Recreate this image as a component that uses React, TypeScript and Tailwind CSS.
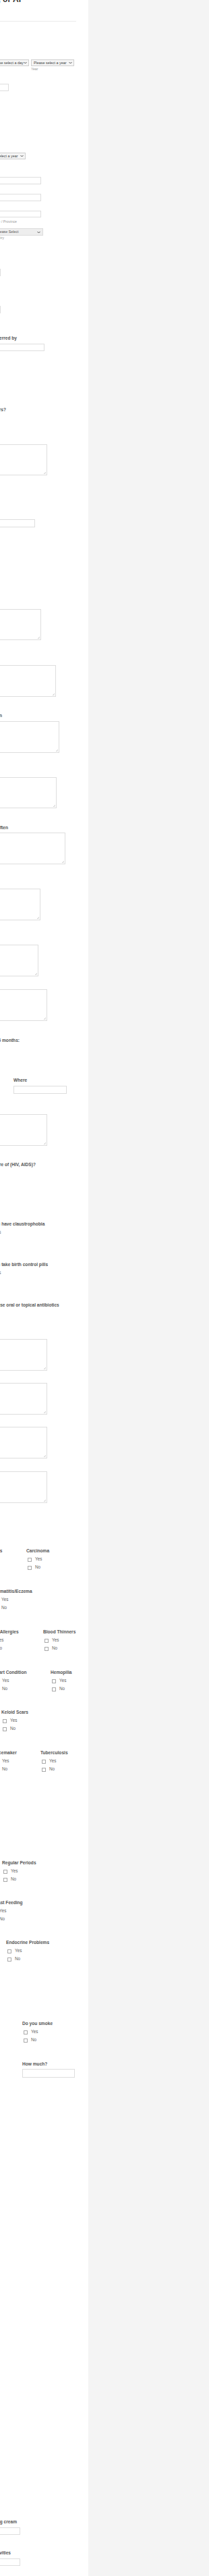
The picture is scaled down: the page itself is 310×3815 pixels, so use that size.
type ClipProps = { text: string; cls: string };

// text whose left part runs off the visible column
function Clip({ text, cls }: ClipProps) {
  return (
    <div className={`flex justify-end ${cls}`}>
      <span className="shrink-0 whitespace-nowrap">{text}</span>
    </div>
  );
}

function Label({ text, cls }: ClipProps) {
  return <Clip text={text} cls={`h-[8px] text-[6.6px] leading-[8px] font-bold text-[#555] ${cls}`} />;
}

function Caption({ text, cls }: ClipProps) {
  return <Clip text={text} cls={`h-[7px] text-[5.2px] leading-[7px] text-[#999] ${cls}`} />;
}

function Input({ cls }: { cls: string }) {
  return <div className={`shrink-0 border border-[#dedede] bg-white ${cls}`} />;
}

function Area({ cls }: { cls: string }) {
  return (
    <div className={`relative h-[47px] shrink-0 border border-[#dedede] bg-white ${cls}`}>
      <svg className="absolute bottom-[1px] right-[1px]" width="4" height="4" viewBox="0 0 4 4">
        <path d="M1 4 L4 1 M2.5 4 L4 2.5" stroke="#b5b5b5" strokeWidth="0.6" />
      </svg>
    </div>
  );
}

function Chevron() {
  return (
    <svg width="5" height="4" viewBox="0 0 5 4" className="shrink-0">
      <path d="M0.5 1 L2.5 3 L4.5 1" fill="none" stroke="#444" strokeWidth="0.9" />
    </svg>
  );
}

function Select({ text, cls }: ClipProps) {
  return (
    <div
      className={`flex shrink-0 items-center justify-between border border-[#cfcfcf] bg-[#f5f5f5] pl-[3px] pr-[2px] text-[5.4px] text-[#444] ${cls}`}
    >
      <span className="whitespace-nowrap">{text}</span>
      <Chevron />
    </div>
  );
}

function Group({ label, cls }: { label: string; cls: string }) {
  return (
    <div className={`shrink-0 ${cls}`}>
      <div className="h-[12px] whitespace-nowrap text-[6.6px] leading-[12px] font-bold text-[#555]">{label}</div>
      {["Yes", "No"].map((o) => (
        <div key={o} className="flex h-[12px] items-center gap-[5px] pl-[2px] text-[6.4px] text-[#666]">
          <span className="mt-[2px] h-[6px] w-[6px] shrink-0 border border-[#a9a9a9] bg-white" />
          <span className="whitespace-nowrap">{o}</span>
        </div>
      ))}
    </div>
  );
}

export default function App() {
  return (
    <div className="flex min-h-[3815px] w-[310px] font-['Liberation_Sans',Arial,sans-serif]">
      <div className="flex w-[131px] shrink-0 flex-col overflow-hidden bg-white">
        <Clip text="Medical History, or AF" cls="-mt-[7px] h-[12px] w-[35px] text-[12px] leading-[12px] font-bold text-[#333]" />
        <div className="-ml-[40px] mt-[26px] h-px w-[153px] shrink-0 bg-[#ebebeb]" />

        <div className="mt-[56px] flex h-[10px]">
          <Select text="Please select a day" cls="-ml-[16px] w-[59px]" />
          <Select text="Please select a year" cls="ml-[3px] w-[64px]" />
        </div>
        <Caption text="Year" cls="ml-[46px] mt-[1px] w-[20px] !justify-start" />
        <Input cls="-ml-[50px] mt-[18px] h-[11px] w-[63px]" />

        <Select text="Please select a year" cls="-ml-[26px] mt-[91px] h-[10px] w-[64px]" />
        <Input cls="-ml-[60px] mt-[26px] h-[11px] w-[121px]" />
        <Input cls="-ml-[60px] mt-[14px] h-[11px] w-[121px]" />
        <Input cls="-ml-[60px] mt-[14px] h-[10px] w-[121px]" />
        <Caption text="State / Province" cls="mt-[3px] w-[25px]" />
        <div className="-ml-[9px] mt-[6px] flex h-[11px] w-[73px] shrink-0 items-center justify-between border border-[#dcdcdc] bg-[#eeeeee] pl-[3px] pr-[3px] text-[5.3px] text-[#555]">
          <span className="whitespace-nowrap">Please Select</span>
          <Chevron />
        </div>
        <Caption text="Country" cls="w-[6px]" />

        <Input cls="-ml-[60px] mt-[42px] h-[11px] w-[61px]" />
        <Input cls="-ml-[60px] mt-[44px] h-[11px] w-[61px]" />

        <Label text="Referred by" cls="mt-[33px] w-[25px]" />
        <Input cls="-ml-[60px] mt-[4px] h-[11px] w-[126px]" />

        <Label text="Have you had any treatments in the past 5 years?" cls="mt-[83px] w-[9px]" />
        <Area cls="-ml-[60px] mt-[47px] !h-[46px] w-[130px]" />
        <Input cls="-ml-[60px] mt-[65px] h-[12px] w-[112px]" />
        <Area cls="-ml-[60px] mt-[121px] !h-[46px] w-[121px]" />
        <Area cls="-ml-[60px] mt-[37px] w-[143px]" />
        <Label text="Skin concern" cls="mt-[24px] w-[3px]" />
        <Area cls="-ml-[60px] mt-[4px] w-[148px]" />
        <Area cls="-ml-[60px] mt-[36px] !h-[46px] w-[144px]" />
        <Label text="How often" cls="mt-[25px] w-[12px]" />
        <Area cls="-ml-[60px] mt-[3px] w-[157px]" />
        <Area cls="-ml-[60px] mt-[36px] w-[120px]" />
        <Area cls="-ml-[60px] mt-[36px] w-[117px]" />
        <Area cls="-ml-[60px] mt-[19px] w-[130px]" />

        <Label text="Have you been out of the country in the last 6 months:" cls="mt-[25px] w-[29px]" />
        <div className="ml-[20px] mt-[51px] h-[8px] text-[6.6px] leading-[8px] font-bold text-[#555]">Where</div>
        <Input cls="ml-[20px] mt-[4px] h-[12px] w-[79px]" />
        <Area cls="-ml-[60px] mt-[30px] w-[130px]" />

        <Label text="Do you have any conditions you are aware of (HIV, AIDS)?" cls="mt-[24px] w-[53px]" />
        <Group label="Do you have claustrophobia" cls="-ml-[22px] mt-[78px]" />
        <Group label="Do you take birth control pills" cls="-ml-[22px] mt-[24px]" />
        <Group label="Do you use oral or topical antibiotics" cls="-ml-[28px] mt-[24px]" />

        <Area cls="-ml-[60px] mt-[20px] w-[130px]" />
        <Area cls="-ml-[60px] mt-[18px] w-[130px]" />
        <Area cls="-ml-[60px] mt-[18px] w-[130px]" />
        <Area cls="-ml-[60px] mt-[19px] w-[130px]" />

        <div className="mt-[65px] flex">
          <Group label="Diabetes" cls="-ml-[24px] w-[63px]" />
          <Group label="Carcinoma" cls="" />
        </div>
        <div className="mt-[24px] flex">
          <Group label="Dermatitis/Eczema" cls="-ml-[11px]" />
        </div>
        <div className="mt-[24px] flex">
          <Group label="Food Allergies" cls="-ml-[18px] w-[82px]" />
          <Group label="Blood Thinners" cls="" />
        </div>
        <div className="mt-[24px] flex">
          <Group label="Heart Condition" cls="-ml-[10px] w-[85px]" />
          <Group label="Hemopilia" cls="" />
        </div>
        <div className="mt-[23px] flex">
          <Group label="Keloid Scars" cls="ml-[2px]" />
        </div>
        <div className="mt-[24px] flex">
          <Group label="Pacemaker" cls="-ml-[10px] w-[70px]" />
          <Group label="Tuberculosis" cls="" />
        </div>
        <div className="mt-[127px] flex">
          <Group label="Regular Periods" cls="ml-[3px]" />
        </div>
        <div className="mt-[23px] flex">
          <Group label="Breast Feeding" cls="-ml-[14px]" />
        </div>
        <div className="mt-[23px] flex">
          <Group label="Endocrine Problems" cls="ml-[9px]" />
        </div>
        <div className="mt-[84px] flex">
          <Group label="Do you smoke" cls="ml-[33px]" />
        </div>
        <div className="ml-[33px] mt-[26px] h-[8px] text-[6.6px] leading-[8px] font-bold text-[#555]">How much?</div>
        <Input cls="ml-[33px] mt-[3px] h-[13px] w-[78px]" />

        <Label text="Are you using any bleaching cream" cls="mt-[654px] w-[25px]" />
        <Input cls="-ml-[60px] mt-[4px] h-[11px] w-[90px]" />
        <Label text="Outdoor activities" cls="mt-[23px] w-[16px]" />
        <Input cls="-ml-[60px] mt-[4px] h-[11px] w-[90px]" />
      </div>
      <div className="flex-1 bg-[#f4f4f4]" />
    </div>
  );
}
